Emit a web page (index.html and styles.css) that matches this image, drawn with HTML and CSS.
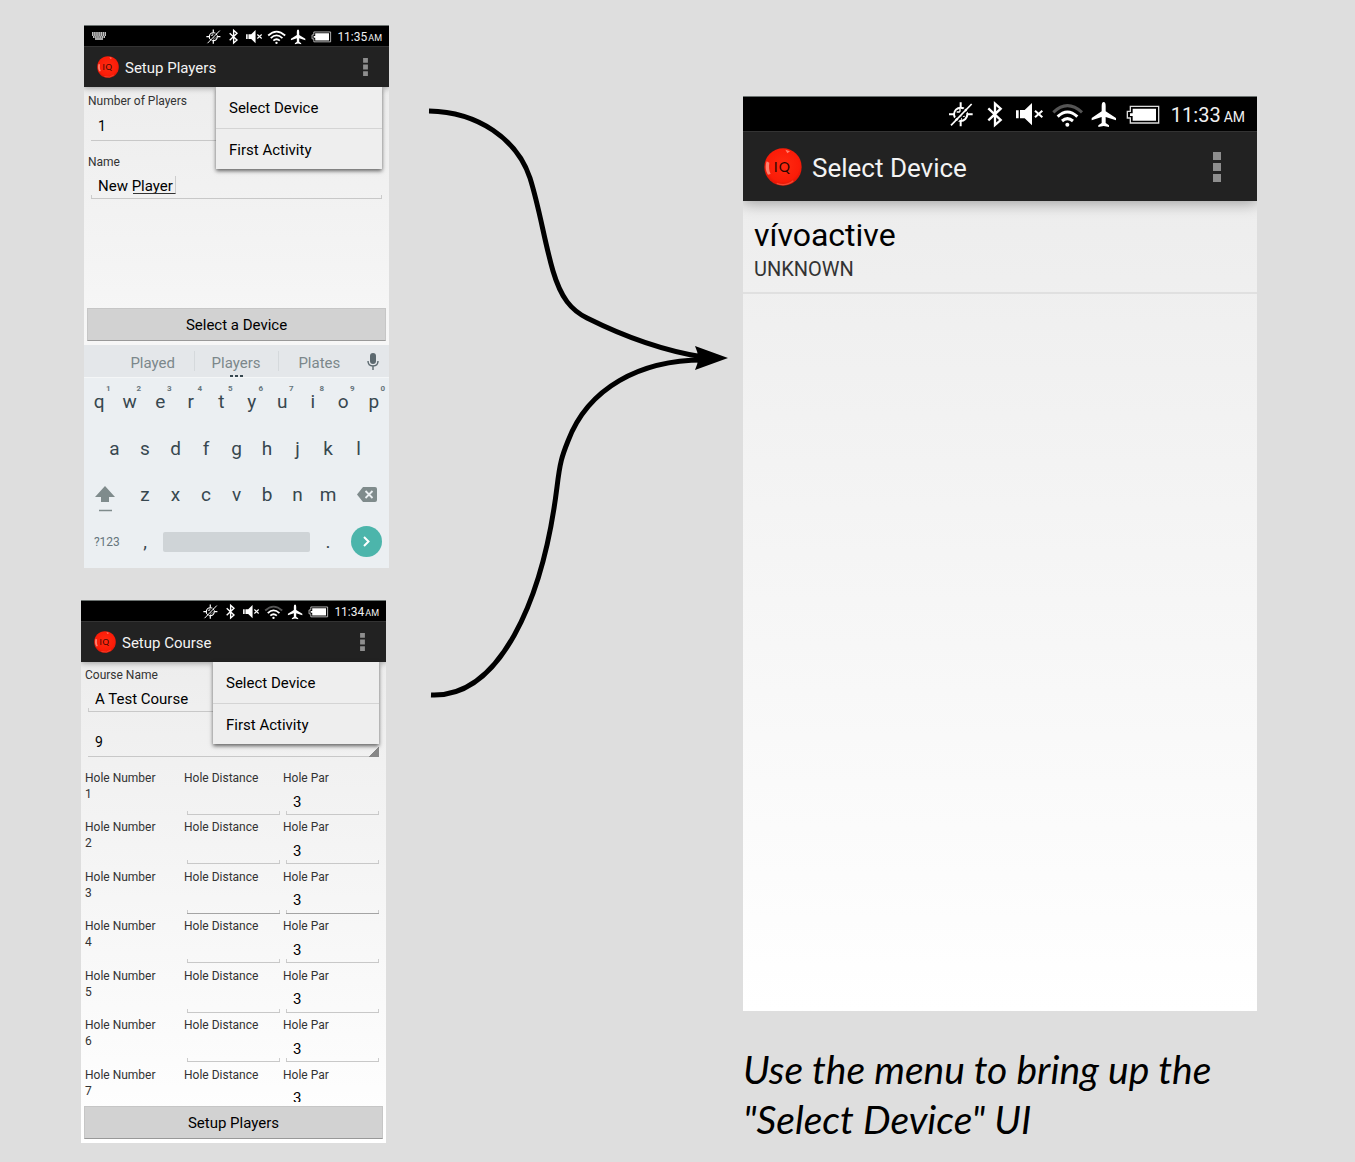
FILE: index.html
```html
<!DOCTYPE html>
<html lang="en">
<head>
<meta charset="utf-8">
<meta name="viewport" content="width=device-width, initial-scale=1">
<title>Select Device flow</title>
<link rel="stylesheet" href="styles.css">
</head>
<body>
<svg class="defs" aria-hidden="true">
  <defs>
    <radialGradient id="red" cx="50%" cy="45%" r="55%">
      <stop offset="0" stop-color="#ff2a10"/><stop offset=".8" stop-color="#fb1c08"/><stop offset="1" stop-color="#dc1607"/>
    </radialGradient>
    <symbol id="logo" viewBox="0 0 114 114">
      <circle cx="57" cy="57" r="56" fill="url(#red)"/>
      <path d="M8 40C3 54 5 70 12 80l8-2c-5-10-6-22-4-34z" fill="#ff9a88" opacity=".8"/>
      <path d="M64 5l14 5-8 6z" fill="#ff9a88" opacity=".8"/>
      <path d="M88 98a50 50 0 0 1-50 8" fill="none" stroke="#ff6a50" stroke-width="4" opacity=".6"/>
      <text y="73" class="logo-text"><tspan x="29">I</tspan><tspan x="44">Q</tspan></text>
    </symbol>
    <symbol id="tray" viewBox="15 30 648 84">
      <g fill="none" stroke="#fff" stroke-width="6">
        <circle cx="62" cy="73" r="20"/>
        <path d="M62 37v16M62 93v16M27 73h15M82 73h16" stroke-width="6"/>
        <path d="M50 66h10v-9M64 89V79h10" stroke-width="4"/>
        <path d="M29 102L91 38M37 110L99 46" stroke="#000" stroke-width="4"/>
        <path d="M33 106L95 42" stroke-width="5"/>
        <path d="M145 55L182 90L165 105V41L182 56L145 91" stroke-width="7"/>
        <path d="M285 62l22 20M307 62l-22 20"/>
      </g>
      <path d="M228 61h8v24h-8zM240 60h14l22-21v67l-22-21h-14z" fill="#fff"/>
      <g fill="none" stroke="#fff" stroke-width="9">
        <path class="wifi-far" d="M340 67Q382 27 426 67"/>
        <path d="M353 80Q382 52 412 80"/>
        <path d="M366 93Q382 79 399 93"/>
      </g>
      <circle cx="382" cy="104" r="6" fill="#fff"/>
      <path d="M491 36q6 0 6 12v16l31 20v7l-31-10v18l10 7v5l-16-3-16 3v-5l10-7V81l-30 10v-7l30-20V48q0-12 6-12z" fill="#fff"/>
      <path d="M571 49h85v50h-85V84h-9V64h9z" fill="none" stroke="#ddd" stroke-width="4"/>
      <path d="M578 56h70v36h-70V78h-8v-8h8z" fill="#fff"/>
    </symbol>
    <symbol id="dots" viewBox="0 0 8 30">
      <path d="M0 0h8v8H0zM0 11h8v8H0zM0 22h8v8H0z" fill="#8e8e8e"/>
    </symbol>
  </defs>
</svg>

<main class="flow">
  <div class="sources">
    <section class="phone phone-players">
      <div class="status">
        <svg class="kbd-icon" viewBox="0 0 14 8"><path d="M0 1h14M0 3h14M1 5h12" stroke="#fff" stroke-width="1.300" stroke-dasharray="1.600 .500"/><path d="M3 7h8" stroke="#fff" stroke-width="1.300"/></svg>
        <svg class="tray wifi-full"><use href="#tray"/></svg>
        <span class="time">11:35</span><span class="ampm">AM</span>
      </div>
      <header class="appbar">
        <svg class="logo"><use href="#logo"/></svg>
        <h2 class="title">Setup Players</h2>
        <button class="more" aria-label="More options"><svg class="dots"><use href="#dots"/></svg></button>
        <div class="menu"><button class="menu-item">Select Device</button><button class="menu-item">First Activity</button></div>
      </header>
      <form class="form">
        <label class="label" for="count">Number of Players</label>
        <select class="spinner" id="count"><option>1</option></select>
        <label class="label label-gap" for="name">Name</label>
        <div class="composing"><input class="field" id="name" value="New Player"></div>
      </form>
      <div class="action"><button class="wide">Select a Device</button></div>
      <div class="suggest">
        <button class="word">Played</button><button class="word current">Players</button><button class="word">Plates</button>
        <button class="mic" aria-label="Voice input"><svg viewBox="0 0 12 18"><rect x="3" y="0" width="6" height="11" rx="3" fill="#5c696f"/><path d="M1 8q0 5 5 5t5-5M6 13v4" fill="none" stroke="#5c696f" stroke-width="1.4"/></svg></button>
      </div>
      <div class="keyboard">
        <div class="keys">
          <button class="key">q<sup>1</sup></button><button class="key">w<sup>2</sup></button><button class="key">e<sup>3</sup></button><button class="key">r<sup>4</sup></button><button class="key">t<sup>5</sup></button><button class="key">y<sup>6</sup></button><button class="key">u<sup>7</sup></button><button class="key">i<sup>8</sup></button><button class="key">o<sup>9</sup></button><button class="key">p<sup>0</sup></button>
        </div>
        <div class="keys keys-inset">
          <button class="key">a</button><button class="key">s</button><button class="key">d</button><button class="key">f</button><button class="key">g</button><button class="key">h</button><button class="key">j</button><button class="key">k</button><button class="key">l</button>
        </div>
        <div class="keys">
          <button class="key key-side" aria-label="Shift"><svg class="shift" viewBox="0 -9 24 35"><path d="M10 0l10 11h-6v5H6v-5H0z" fill="#7f8b8c"/><path d="M4 24.500h13" stroke="#7f8b8c" stroke-width="1.500"/></svg></button>
          <button class="key">z</button><button class="key">x</button><button class="key">c</button><button class="key">v</button><button class="key">b</button><button class="key">n</button><button class="key">m</button>
          <button class="key key-side" aria-label="Backspace"><svg class="back" viewBox="-2 0 22 15"><path d="M6 0h12q2 0 2 2v11q0 2-2 2H6L0 7.500z" fill="#7f8b8c"/><path d="M8.500 4l7 7M15.500 4l-7 7" stroke="#ebeff2" stroke-width="1.800"/></svg></button>
        </div>
        <div class="keys">
          <button class="key key-side key-mode">?123</button>
          <button class="key">,</button>
          <button class="key key-space" aria-label="Space"><span class="bar"></span></button>
          <button class="key">.</button>
          <button class="key key-side" aria-label="Next"><svg class="next" viewBox="0 0 31 31"><circle cx="15.500" cy="15.500" r="15.500" fill="#4cb5ab"/><path d="M13 11l4.500 4.500L13 20" fill="none" stroke="#fff" stroke-width="2"/></svg></button>
        </div>
      </div>
    </section>

    <section class="phone phone-course">
      <div class="status">
        <svg class="tray"><use href="#tray"/></svg>
        <span class="time">11:34</span><span class="ampm">AM</span>
      </div>
      <header class="appbar">
        <svg class="logo"><use href="#logo"/></svg>
        <h2 class="title">Setup Course</h2>
        <button class="more" aria-label="More options"><svg class="dots"><use href="#dots"/></svg></button>
        <div class="menu"><button class="menu-item">Select Device</button><button class="menu-item">First Activity</button></div>
      </header>
      <form class="form">
        <label class="label" for="course">Course Name</label>
        <input class="field" id="course" value="A Test Course">
        <select class="spinner spinner-gap" aria-label="Holes"><option>9</option></select>
        <div class="holes">
          <div class="hole"><span class="label">Hole Number<br>1</span><label class="label">Hole Distance<input class="field"></label><label class="label">Hole Par<input class="field" value="3"></label></div>
          <div class="hole"><span class="label">Hole Number<br>2</span><label class="label">Hole Distance<input class="field"></label><label class="label">Hole Par<input class="field" value="3"></label></div>
          <div class="hole active"><span class="label">Hole Number<br>3</span><label class="label">Hole Distance<input class="field"></label><label class="label">Hole Par<input class="field" value="3"></label></div>
          <div class="hole"><span class="label">Hole Number<br>4</span><label class="label">Hole Distance<input class="field"></label><label class="label">Hole Par<input class="field" value="3"></label></div>
          <div class="hole"><span class="label">Hole Number<br>5</span><label class="label">Hole Distance<input class="field"></label><label class="label">Hole Par<input class="field" value="3"></label></div>
          <div class="hole"><span class="label">Hole Number<br>6</span><label class="label">Hole Distance<input class="field"></label><label class="label">Hole Par<input class="field" value="3"></label></div>
          <div class="hole"><span class="label">Hole Number<br>7</span><label class="label">Hole Distance<input class="field"></label><label class="label">Hole Par<input class="field" value="3"></label></div>
        </div>
      </form>
      <div class="action"><button class="wide">Setup Players</button></div>
    </section>
  </div>

  <svg class="arrows" viewBox="389 0 354 1142" aria-hidden="true">
    <g fill="none" stroke="#000" stroke-width="5">
      <path d="M429 111C478 112 517 139 530 178C540 210 544 240 553 271C561 298 571 310 587 318C625 337 665 351 703 357"/>
      <path d="M431 695C500 698 543 600 557 487C560 462 562 456 568 441C588 388 640 360 703 360"/>
    </g>
    <path d="M728 358l-33-12q6 12 0 24z"/>
  </svg>

  <div class="target">
    <section class="phone phone-large">
      <div class="status">
        <svg class="tray"><use href="#tray"/></svg>
        <span class="time">11:33</span><span class="ampm">AM</span>
      </div>
      <header class="appbar">
        <svg class="logo"><use href="#logo"/></svg>
        <h2 class="title">Select Device</h2>
        <button class="more" aria-label="More options"><svg class="dots"><use href="#dots"/></svg></button>
      </header>
      <ul class="devices">
        <li class="device"><span class="device-name">vívoactive</span><span class="device-state">UNKNOWN</span></li>
      </ul>
    </section>
    <p class="caption">Use the menu to bring up the "Select Device" UI</p>
  </div>
</main>
</body>
</html>
```
FILE: styles.css
```css
* { box-sizing: border-box; }
body { margin: 0; background: #dedede; color: #000; font-family: Roboto, sans-serif; }
button, input, select { margin: 0; padding: 0; border: 0; border-radius: 0; background: none; color: inherit; font: inherit; appearance: none; outline: 0; }
svg { display: block; flex: none; }
h2, p, ul { margin: 0; padding: 0; font-weight: 400; }
.defs { position: absolute; width: 0; height: 0; }
.logo-text { font: 42px Lato, sans-serif; fill: #2a0500; }

.flow { display: grid; grid-template-columns: 308fr 354fr 514fr; align-items: start; padding: 0 98px 0 81px; }
.sources { display: flex; flex-direction: column; gap: 32px; padding: 25px 0 19px; }
.arrows { width: 100%; }
.target { padding-top: 96px; }

.phone { display: flex; flex-direction: column; min-height: 0; background: linear-gradient(#ebebeb, #fff); }
.phone-players { margin-left: 3px; aspect-ratio: 305 / 543; background: linear-gradient(#ebebeb, #f7f7f7 320px); }
.phone-course { margin-right: 3px; aspect-ratio: 305 / 543; }
.phone-large { aspect-ratio: 514 / 915; }

.status { display: flex; align-items: center; height: 22px; padding-right: 7px; background: #000; border-top: 1px solid #6b7270; border-bottom: 1px solid #333; color: #f0f0f0; }
.kbd-icon { width: 14px; height: 8px; margin-left: 8px; }
.tray { width: 128px; height: 17px; margin-left: auto; }
.wifi-full { --far: #fff; }
.wifi-far { stroke: var(--far, #555); }
.time { margin-left: 5px; padding-top: 1px; font-size: 12px; }
.ampm { margin-left: 1px; padding-top: 3px; font-size: 9px; }

.appbar { position: relative; z-index: 1; display: flex; align-items: center; height: 40px; padding: 0 21px 0 13px; background: #222; color: #f3f3f3; box-shadow: 0 1px 6px rgba(0, 0, 0, .35); clip-path: inset(0 0 -100px 0); }
.logo { width: 22px; height: 22px; }
.title { flex: 1; margin-left: 6px; padding-top: 1px; font-size: 15px; }
.dots { width: 5px; height: 18px; }
.menu { position: absolute; top: 40px; right: 7px; width: 166px; background: #eee; color: #000; box-shadow: 0 2px 4px rgba(0, 0, 0, .6); }
.menu-item { display: block; width: 100%; height: 41px; padding: 1px 0 0 13px; text-align: left; font-size: 15px; }
.menu-item + .menu-item { border-top: 1px solid #d4d4d4; }

.form { flex: 1 1 0; min-height: 0; overflow: hidden; padding: 5px 4px 0; }
.phone-players .form { padding-top: 6px; }
.label { display: block; font-size: 12px; line-height: 16px; color: #333; }
.field, .spinner { display: block; width: calc(100% - 6px); height: 29px; margin: 0 3px; padding: 2px 0 0 7px; color: #000; font-size: 15px;
  --line: #c8c8c8;
  background: linear-gradient(var(--line), var(--line)) left bottom / 100% 1px no-repeat; }
.field { background: linear-gradient(var(--line), var(--line)) left bottom / 100% 1px no-repeat, linear-gradient(#ccc, #ccc) left bottom / 1px 4px no-repeat, linear-gradient(#ccc, #ccc) right bottom / 1px 4px no-repeat; }
.spinner { height: 32px; font-size: 14px; }
.label-gap { margin-top: 13px; }
.composing { position: relative; }
.composing::after { content: ""; position: absolute; left: 45px; top: 6px; width: 42px; height: 17px; border-bottom: 1px solid #333; border-right: 1px solid #ccc; }
.spinner-gap { margin-top: 13px; background: linear-gradient(135deg, transparent 50%, #888 50%) right bottom / 10px 10px no-repeat, linear-gradient(#c8c8c8, #c8c8c8) left bottom / 100% 1px no-repeat; }
.holes { display: grid; grid-template-rows: repeat(7, 1fr); height: 346px; margin-top: 13px; }
.hole { display: grid; grid-template-columns: repeat(3, 1fr); align-items: start; }
.active .field { --line: #a4a4a4; }

.action { padding: 4px 3px; }
.wide { display: block; width: 100%; height: 33px; background: #d2d2d2; border: 1px solid #c6c6c6; border-bottom-color: #999; font-size: 15px; }

.suggest { display: grid; grid-template-columns: 27px 1fr 1fr 1fr 28px; height: 33px; background: #e4e7ea; border-bottom: 1px solid #f4f6f7; color: #7c878b; font-size: 15px; }
.word { position: relative; padding-top: 4px; background: linear-gradient(#d5d9dc, #d5d9dc) left center / 1px 20px no-repeat; }
.word:first-child { grid-column: 2; background: none; }
.current::after { content: ""; position: absolute; left: calc(50% - 6px); bottom: 0; width: 13px; height: 2px; background: repeating-linear-gradient(90deg, #37474f 0 3px, transparent 3px 5px); }
.mic { padding-right: 4px; }
.mic svg { width: 12px; height: 18px; margin: 2px auto 0; }
.keyboard { display: grid; grid-template-rows: repeat(4, 1fr); height: 190px; padding-bottom: 3px; background: #ebeff2; color: #37474f; font-size: 19px; }
.keys { display: flex; }
.keys-inset { padding: 0 5%; }
.key { position: relative; flex: 1 1 0; min-width: 0; }
.key sup { position: absolute; top: 5px; right: 4px; color: #66757c; font-size: 8px; font-weight: 700; line-height: 12px; }
.key-side { flex-grow: 1.5; }
.key-side svg { margin: 0 auto; }
.key-mode { color: #66757c; font-size: 12px; }
.key-space { flex-grow: 5; }
.bar { display: block; height: 20px; margin: 0 3px; border-radius: 2px; background: #cfd4d7; }
.shift { width: 24px; height: 35px; }
.back { width: 22px; height: 15px; }
.next { width: 31px; height: 31px; }

.phone-large .status { height: 36px; padding-right: 12px; }
.phone-large .tray { width: 216px; height: 28px; }
.phone-large .time { margin-left: 10px; padding-top: 2px; font-size: 20px; }
.phone-large .ampm { margin-left: 3px; padding-top: 6px; font-size: 14px; }
.phone-large .appbar { height: 69px; padding: 0 36px 0 21px; box-shadow: 0 2px 14px rgba(0, 0, 0, .35); }
.phone-large .logo { width: 38px; height: 38px; }
.phone-large .title { margin-left: 10px; padding-top: 2px; font-size: 26px; }
.phone-large .dots { width: 8px; height: 30px; }
.devices { list-style: none; }
.device { display: flex; flex-direction: column; padding: 16px 11px 8px; border-bottom: 2px solid #e0e0e0; }
.device-name { font-size: 32px; line-height: 37px; }
.device-state { color: #333; font-size: 20px; line-height: 30px; }
.caption { margin-top: 33px; font: italic 39px/50px Lato, sans-serif; }
```
